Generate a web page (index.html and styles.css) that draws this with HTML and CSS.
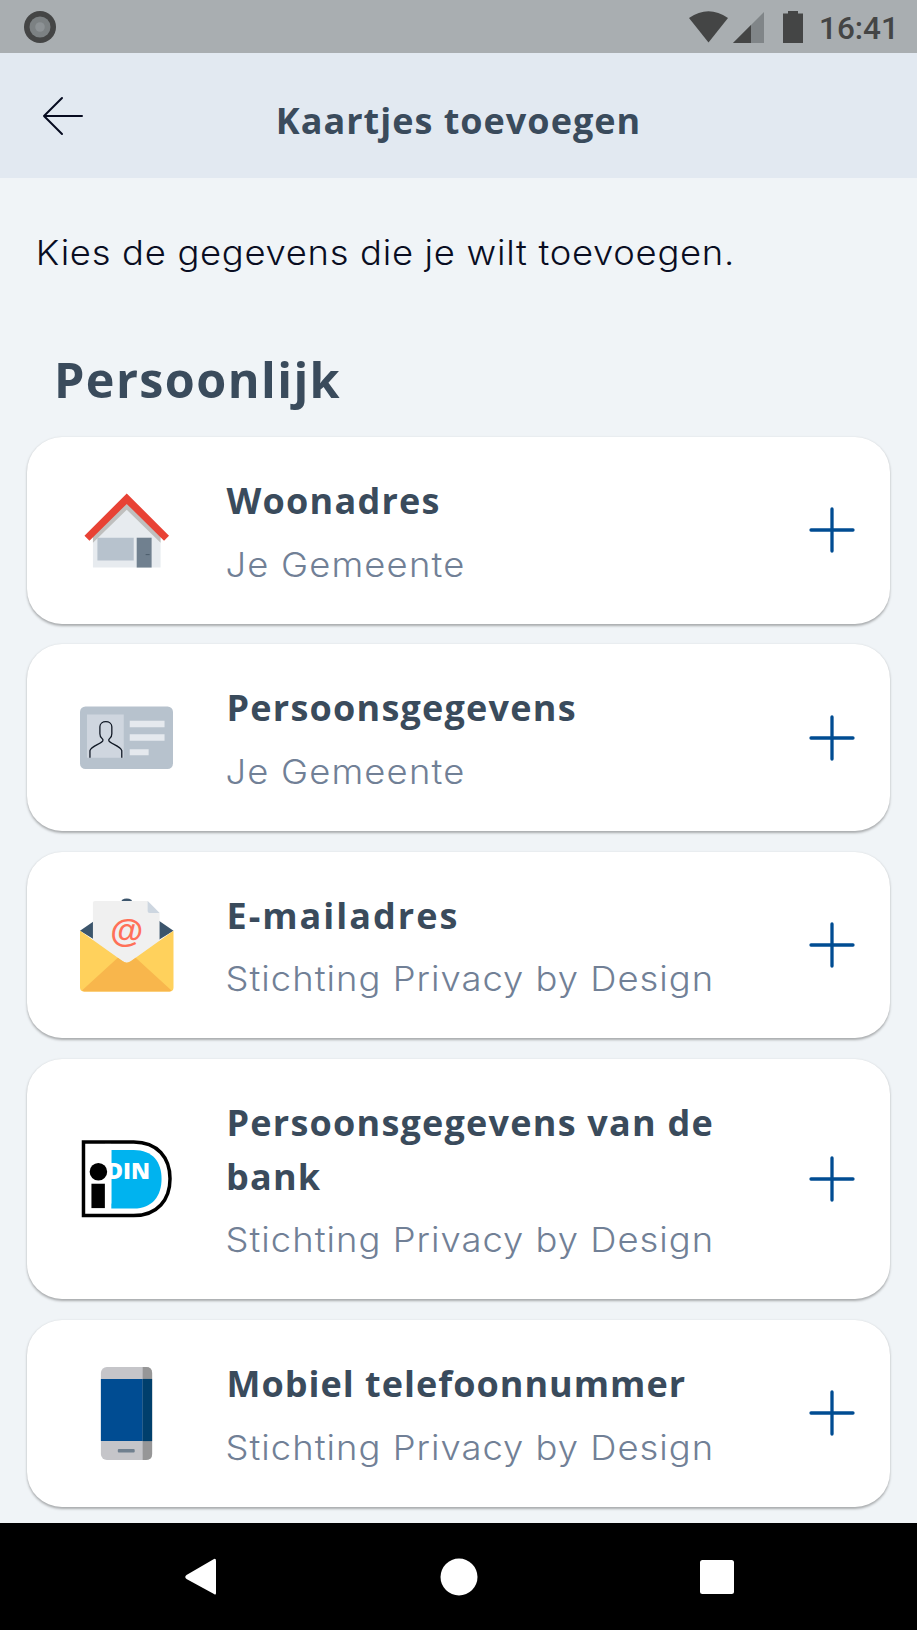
FILE: index.html
```html
<!DOCTYPE html>
<html lang="nl">
<head>
<meta charset="utf-8">
<title>Kaartjes toevoegen</title>
<link rel="stylesheet" href="styles.css">
</head>
<body>
<div class="screen">
  <div class="status">
    <svg width="34" height="34" viewBox="0 0 34 34"><circle cx="17" cy="17" r="16" fill="#444545"/><circle cx="17" cy="17" r="10.5" fill="#7c8183"/><circle cx="17" cy="17" r="4.8" fill="#8d9295"/></svg>
    <div class="status-right">
      <svg width="116" height="34" viewBox="0 0 116 34"><path d="M0 8Q19.500-5.500 39 8L19.500 32.500Z" fill="#444545"/><path d="M75 2V33H44Z" fill="#808588"/><path d="M62 15V33H44Z" fill="#444545"/><path d="M94 3.500h5V1h10v2.500h5V33H94Z" fill="#444545"/></svg>
      <span class="time">16:41</span>
    </div>
  </div>
  <header class="header">
    <svg class="back" width="42" height="40" viewBox="0 0 42 40" fill="none" stroke="#070b20" stroke-width="2" stroke-linecap="round" stroke-linejoin="round"><path d="M40 20H2M20 2L2 20L20 38"/></svg>
    <h1 class="header-title">Kaartjes toevoegen</h1>
  </header>
  <main class="content">
    <p class="intro">Kies de gegevens die je wilt toevoegen.</p>
    <h2 class="section">Persoonlijk</h2>
    <div class="cards">
      <div class="card">
        <svg class="icon" viewBox="0 0 94 94"><g transform="translate(0 9)"><path d="M13 45L47 11L81 45V75H13Z" fill="#e7ebef"/><path d="M13 43L47 9L81 43V50L47 17L13 50Z" fill="#bfbfbe"/><path d="M4.500 43L47 .5L89.500 43L84.500 48L47 11L9.500 48Z" fill="#e84235"/><path d="M17.500 45H54V68H17.500Z" fill="#b7c2cd"/><path d="M57 45H72V75H57Z" fill="#70808f"/><path d="M66 62h4" stroke="#4c5d6b"/></g></svg>
        <div class="text"><h3 class="name">Woonadres</h3><p class="issuer short">Je Gemeente</p></div>
        <svg class="plus" viewBox="0 0 46 46"><path d="M23 2V44M2 23H44"/></svg>
      </div>
      <div class="card">
        <svg class="icon" viewBox="0 0 94 94"><rect y="15.500" width="93.500" height="63" rx="5.500" fill="#b7c2cd"/><path d="M7 23.500H44V67H7Z" fill="#cfd6df"/><path d="M10 67V60C11 55 22 53 23 50C24 47 20 49 20 43V36C20 29 32 29 32 36V43C32 49 28 47 29 50C30 53 41 55 42 60V67" fill="none" stroke="#111925" stroke-width="1.300"/><path d="M50 30H85V36.500H50ZM50 43.500H85V50H50ZM50 58.500H69V64.500H50Z" fill="#e5e9ee"/></svg>
        <div class="text"><h3 class="name">Persoonsgegevens</h3><p class="issuer short">Je Gemeente</p></div>
        <svg class="plus" viewBox="0 0 46 46"><path d="M23 2V44M2 23H44"/></svg>
      </div>
      <div class="card">
        <svg class="icon" viewBox="0 0 94 94"><path d="M42 2Q47-1 52 2V4L94 33L47 62L0 33L42 4Z" fill="#3c556c"/><path d="M13 5Q13 3 15 3H68L80 15V50L47 72L13 50Z" fill="#f0f0f0"/><path d="M68 3L80 15H70Q68 15 68 13Z" fill="#cdd6e0"/><path d="M0 33L43 63.500Q47 66.500 51 63.500L94 33V90Q94 94 90 94H4Q0 94 0 90Z" fill="#ffd15c"/><path d="M2 93L38 60L43 63.500Q47 66.500 51 63.500L56 60L92 93Q91 94 90 94H4Z" fill="#f8b64c"/><text x="47" y="44" class="at">@</text></svg>
        <div class="text"><h3 class="name mail">E-mailadres</h3><p class="issuer">Stichting Privacy by Design</p></div>
        <svg class="plus" viewBox="0 0 46 46"><path d="M23 2V44M2 23H44"/></svg>
      </div>
      <div class="card">
        <svg class="icon" viewBox="0 0 94 94"><path d="M3.500 10H54C78 10 90.500 26 90.500 47S78 84 54 84H3.500Z" fill="#fff" stroke="#000" stroke-width="3.500"/><path d="M31.500 18H54C73 18 82 30 82 47S73 77 54 77H31.500Z" fill="#00b3ef"/><text x="26.500" y="47.500" class="din">DIN</text><circle cx="18.500" cy="40" r="12" fill="#fff"/><path d="M25 12h6.500v60h-6.500z" fill="#fff"/><circle cx="18.500" cy="40" r="8.800"/><path d="M11.500 52H25V76.500H11.500Z"/></svg>
        <div class="text"><h3 class="name">Persoonsgegevens van de bank</h3><p class="issuer">Stichting Privacy by Design</p></div>
        <svg class="plus" viewBox="0 0 46 46"><path d="M23 2V44M2 23H44"/></svg>
      </div>
      <div class="card">
        <svg class="icon" viewBox="0 0 94 94"><rect x="21" y="0" width="51.500" height="93.500" rx="6" fill="#c5c5c9"/><path d="M63 0H66.500Q72.500 0 72.500 6V87.500Q72.500 93.500 66.500 93.500H63Z" fill="#969697"/><path d="M21 12H63V74.500H21Z" fill="#004c92"/><path d="M63 12H72.500V74.500H63Z" fill="#003f6c"/><rect x="38" y="82.500" width="17" height="3.500" rx="1" fill="#70808f"/></svg>
        <div class="text"><h3 class="name phone">Mobiel telefoonnummer</h3><p class="issuer">Stichting Privacy by Design</p></div>
        <svg class="plus" viewBox="0 0 46 46"><path d="M23 2V44M2 23H44"/></svg>
      </div>
    </div>
  </main>
  <nav class="nav">
    <svg viewBox="0 0 40 40"><path d="M35 4V36Q35 38.500 33 37L5.500 22Q3 20 5.500 18L33 2Q35 1 35 4Z"/></svg>
    <svg viewBox="0 0 40 40"><circle cx="20" cy="20" r="18.500"/></svg>
    <svg viewBox="0 0 40 40"><rect x="3" y="3" width="34" height="34" rx="2.500"/></svg>
  </nav>
</div>
</body>
</html>
```
FILE: styles.css
```css
* { box-sizing: border-box; margin: 0; }
body { background: #f0f4f7; }
svg { display: block; flex: none; }
.screen { width: 917px; height: 1630px; display: flex; flex-direction: column; overflow: hidden; }
.status { height: 53px; flex: none; background: #a9aeb1; display: flex; justify-content: space-between; align-items: center; padding: 0 21px 0 23px; }
.status-right { display: flex; align-items: center; gap: 14px; color: #444545; }
.time { width: 77px; font: 500 31.500px/34px Roboto, sans-serif; padding-top: 4px; white-space: nowrap; }
.header { height: 125px; flex: none; background: #e2e9f1; display: grid; grid-template-columns: 100px 717px 100px; align-items: center; color: #3a4b5c; }
.back { margin: 0 0 0 41.500px; }
.header-title { font: 700 36px/44px "Open Sans", sans-serif; letter-spacing: 1px; text-align: center; padding-top: 11px; white-space: nowrap; }
.content { height: 1345px; flex: none; }
.intro { font: 300 34px/44px Inter, sans-serif; letter-spacing: .660px; color: #090d22; padding: 53px 0 0 33.500px; white-space: nowrap; transform: scaleX(1.07); transform-origin: 0 0; }
.section { font: 700 48.500px/60px "Open Sans", sans-serif; letter-spacing: 1.400px; color: #3a4b5c; padding: 74px 0 0 54px; height: 162px; white-space: nowrap; }
.cards { display: flex; flex-direction: column; gap: 20.900px; padding: 0 27px; }
.card { min-height: 186.500px; background: #fff; border-radius: 35px; box-shadow: 0 1.500px 2.500px rgba(0,0,0,.3); display: flex; align-items: center; padding: 37px 35px 32px 53px; }
.icon { width: 93.500px; height: 93.500px; margin: -5px 52.500px 0 0; overflow: visible; }
.text { width: 535px; flex: none; }
.name { font: 700 36px/53.500px "Open Sans", sans-serif; letter-spacing: 1.220px; color: #3a4b5c; text-indent: .5px; }
.mail { letter-spacing: 2px; }
.phone { letter-spacing: 1px; }
.issuer { margin: 10px 0 1px; font: 300 34px/53px Inter, sans-serif; letter-spacing: .950px; text-indent: -.500px; color: #718096; white-space: nowrap; transform: scaleX(1.07); transform-origin: 0 0; }
.short { letter-spacing: 1.100px; }
.plus { width: 46px; height: 46px; margin: -5px 0 0 auto; fill: none; stroke: #004c92; stroke-width: 3.300; stroke-linecap: round; }
.at { font: bold 34px "Liberation Sans", sans-serif; fill: #ff7058; text-anchor: middle; }
.din { font: 800 23px "Open Sans", sans-serif; fill: #fff; }
.nav { height: 107px; background: #000; display: flex; justify-content: center; gap: 218px; padding-top: 34px; }
.nav svg { width: 40px; height: 40px; fill: #fff; }
```
